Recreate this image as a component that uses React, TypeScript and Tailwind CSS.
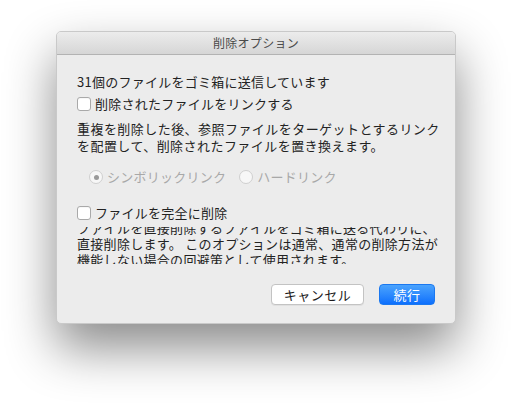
import React from "react";

const font = { fontFamily: '"Noto Sans CJK JP", "Noto Sans", sans-serif' };

const Checkbox: React.FC<{ label: string }> = ({ label }) => (
  <div className="flex items-center h-4 gap-[4px]">
    <div className="w-[14px] h-[14px] rounded-[3px] border border-[#a9a9a9] bg-white shadow-[inset_0_1px_0_rgba(0,0,0,0.03)]" />
    <span className="text-[13px] tracking-[0.25px] leading-4 whitespace-nowrap text-[#232323]">{label}</span>
  </div>
);

const Radio: React.FC<{ label: string; checked?: boolean }> = ({ label, checked }) => (
  <div className="flex items-center gap-[4px]">
    <div className="w-[14px] h-[14px] rounded-full border border-[#cfcfcf] bg-[#f7f7f7] flex items-center justify-center">
      {checked && <div className="w-[5px] h-[5px] rounded-full bg-[#9a9a9a]" />}
    </div>
    <span className="text-[13px] tracking-[0.25px] leading-4 whitespace-nowrap text-[#a8a8a8]">{label}</span>
  </div>
);

export default function App() {
  return (
    <div className="w-[512px] h-[404px] bg-white pl-[56px] pt-[31px]" style={font}>
      <div className="w-[400px] h-[293px] rounded-[5px] bg-[#ececec] border border-[#c9c9c9] shadow-[0_24px_50px_rgba(0,0,0,0.46)] overflow-hidden flex flex-col">
        {/* Title bar */}
        <div className="h-[23px] shrink-0 bg-gradient-to-b from-[#ececec] to-[#d6d6d6] border-b border-[#b3b3b3] flex items-center justify-center">
          <span className="text-[12px] tracking-[0.3px] text-[#4a4a4a]">削除オプション</span>
        </div>

        {/* Body */}
        <div className="flex flex-col pl-[20px] pr-[10px] whitespace-nowrap">
          <div className="mt-[19px] text-[13px] tracking-[0.25px] leading-4 text-[#232323]">
            31個のファイルをゴミ箱に送信しています
          </div>
          <div className="mt-[6px]">
            <Checkbox label="削除されたファイルをリンクする" />
          </div>
          <div className="mt-[8px] text-[13px] tracking-[0.45px] leading-[17px] text-[#232323]">
            <div>重複を削除した後、参照ファイルをターゲットとするリンク</div>
            <div>を配置して、削除されたファイルを置き換えます。</div>
          </div>
          <div className="mt-[15px] flex items-center gap-[13px] pl-[12px]">
            <Radio label="シンボリックリンク" checked />
            <Radio label="ハードリンク" />
          </div>
          <div className="mt-[20px]">
            <Checkbox label="ファイルを完全に削除" />
          </div>
          <div className="mt-[6px] h-[37px] overflow-hidden">
            <div className="-mt-[7px] text-[13px] tracking-[0.3px] leading-[16px] text-[#232323]">
              <div>ファイルを直接削除するファイルをゴミ箱に送る代わりに、</div>
              <div>直接削除します。 このオプションは通常、通常の削除方法が</div>
              <div>機能しない場合の回避策として使用されます。</div>
            </div>
          </div>
          <div className="mt-[20px] pr-[10px] flex justify-end gap-[15px]">
            <button className="w-[93px] h-[21px] rounded-[4px] bg-white border border-[#c3c3c3] shadow-[0_1px_0_rgba(0,0,0,0.05)] text-[13px] tracking-[0.45px] text-[#1a1a1a] flex items-center justify-center">
              キャンセル
            </button>
            <button className="w-[56px] h-[21px] rounded-[4px] bg-gradient-to-b from-[#4aa3fd] to-[#0c6ffd] border border-[#1b78f0] text-[13px] tracking-[0.45px] text-white flex items-center justify-center">
              続行
            </button>
          </div>
        </div>
      </div>
    </div>
  );
}
